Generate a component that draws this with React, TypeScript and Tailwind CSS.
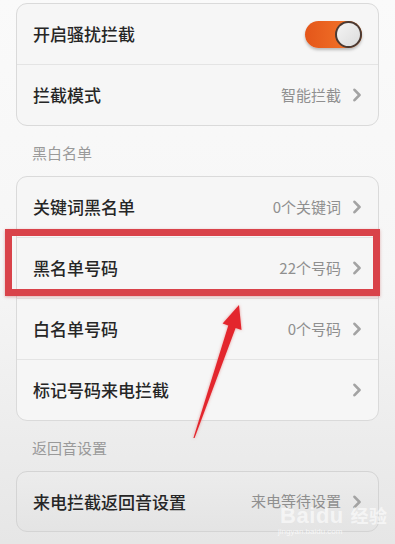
import React from 'react';

const font = { fontFamily: '"Noto Sans CJK SC", "Noto Sans", sans-serif' };

const Chevron: React.FC = () => (
  <svg width="10" height="14" viewBox="0 0 10 14" className="shrink-0">
    <path d="M2.5 1.8l5 5.2-5 5.2" fill="none" stroke="#a3a3a3" strokeWidth="2.6" strokeLinecap="round" strokeLinejoin="round" />
  </svg>
);

const Toggle: React.FC = () => (
  <div className="relative w-[57px] h-[27px] rounded-full bg-gradient-to-r from-[#e4561a] to-[#f57a2c] shadow-[0_2px_3px_rgba(0,0,0,0.25)]">
    <div className="absolute right-0 top-0 w-[27px] h-[27px] rounded-full bg-[#4a3a33] p-[2px]">
      <div className="w-full h-full rounded-full bg-gradient-to-br from-[#f4f4f4] to-[#dcdcdc]" />
    </div>
  </div>
);

type RowProps = { label: string; value?: string; h?: string; divider?: boolean; right?: React.ReactNode };

const Row: React.FC<RowProps> = ({ label, value, h = 'h-[61px]', divider, right }) => (
  <div className={`flex items-center justify-between pl-[16px] pr-[16px] ${h} ${divider ? 'border-t border-[#e4e4e4]' : ''}`}>
    <span className="text-[17px] text-[#262626] font-medium">{label}</span>
    {right ?? (
      <div className="flex items-center gap-[11px]">
        {value && <span className="text-[15px] text-[#8f8f8f]">{value}</span>}
        <Chevron />
      </div>
    )}
  </div>
);

export default function App() {
  return (
    <div
      style={font}
      className="relative w-[395px] h-[544px] overflow-hidden bg-gradient-to-b from-[#fafafa] via-[#f6f6f6] to-[#e6e6e6]"
    >
      <div className="px-4 pt-[3px]">
        <div className="rounded-[11px] border border-[#dadada] bg-[#f6f6f6]">
          <Row label="开启骚扰拦截" h="h-[60px]" right={<Toggle />} />
          <Row label="拦截模式" value="智能拦截" divider />
        </div>

        <div className="pl-[16px] pt-[16px] h-[50px] text-[15px] text-[#9a9a9a]">黑白名单</div>

        <div className="rounded-[11px] border border-[#dadada] bg-[#f6f6f6]">
          <Row label="关键词黑名单" value="0个关键词" h="h-[60px]" />
          <Row label="黑名单号码" value="22个号码" divider />
          <Row label="白名单号码" value="0个号码" divider />
          <Row label="标记号码来电拦截" divider />
        </div>

        <div className="pl-[16px] pt-[16px] h-[50px] text-[15px] text-[#9a9a9a]">返回音设置</div>

        <div className="rounded-[11px] border border-[#d4d4d4] bg-gradient-to-b from-[#ececec] to-[#e4e4e4]">
          <Row label="来电拦截返回音设置" value="来电等待设置" h="h-[59px]" />
        </div>
      </div>

      {/* red highlight box */}
      <div className="absolute left-[5px] top-[229px] w-[375px] h-[67px] border-[7px] border-[#d9434a] shadow-[0_1px_3px_rgba(180,40,40,0.35)] pointer-events-none" />

      {/* arrow */}
      <svg className="absolute inset-0 pointer-events-none" width="395" height="544" viewBox="0 0 395 544">
        <polygon
          points="239,305 241.5,330 235.6,328 194.6,438 193.4,438 228.3,325.6 222.6,323.4"
          fill="#e3262d"
          style={{ filter: 'drop-shadow(0 0 1.5px rgba(220,60,60,0.5))' }}
        />
      </svg>

      {/* watermark */}
      <div className="absolute left-[280px] top-[499px] text-[22px] font-bold text-white/60 tracking-wide pointer-events-none" style={{ fontFamily: '"Liberation Sans", "Noto Sans CJK SC", sans-serif' }}>
        Baidu <span className="text-[18px]">经验</span>
      </div>
      <div className="absolute left-[278px] top-[526px] text-[8px] text-white/70 pointer-events-none" style={{ fontFamily: '"Liberation Sans", sans-serif' }}>
        jingyan.baidu.com
      </div>
    </div>
  );
}
